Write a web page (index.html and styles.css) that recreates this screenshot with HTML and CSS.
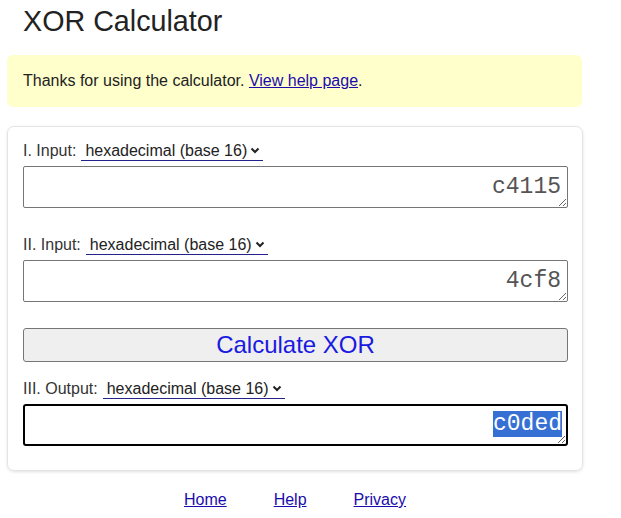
FILE: index.html
```html
<!DOCTYPE html>
<html lang="en">
<head>
<meta charset="utf-8">
<title>XOR Calculator</title>
<link rel="stylesheet" href="styles.css">
</head>
<body>
<div class="page">
  <h1 class="title">XOR Calculator</h1>
  <div class="notice">Thanks for using the calculator. <a href="#" class="link">View help page</a>.</div>
  <form class="card">
    <div class="row">
      <span class="label">I. Input:</span>
      <span class="sel">
        <select class="sel-input"><option>hexadecimal (base 16)</option></select>
        <svg class="chev" width="10" height="7" viewBox="0 0 10 7"><polyline points="1.5,1.5 5,5 8.5,1.5" fill="none" stroke="#222" stroke-width="2"/></svg>
      </span>
    </div>
    <textarea class="field">c4115</textarea>

    <div class="row row-gap">
      <span class="label">II. Input:</span>
      <span class="sel">
        <select class="sel-input"><option>hexadecimal (base 16)</option></select>
        <svg class="chev" width="10" height="7" viewBox="0 0 10 7"><polyline points="1.5,1.5 5,5 8.5,1.5" fill="none" stroke="#222" stroke-width="2"/></svg>
      </span>
    </div>
    <textarea class="field">4cf8</textarea>

    <button type="button" class="calc">Calculate XOR</button>

    <div class="row row-out">
      <span class="label">III. Output:</span>
      <span class="sel">
        <select class="sel-input"><option>hexadecimal (base 16)</option></select>
        <svg class="chev" width="10" height="7" viewBox="0 0 10 7"><polyline points="1.5,1.5 5,5 8.5,1.5" fill="none" stroke="#222" stroke-width="2"/></svg>
      </span>
    </div>
    <div class="field output"><span class="selected">c0ded</span></div>
  </form>
  <nav class="footer">
    <a href="#" class="link">Home</a>
    <a href="#" class="link">Help</a>
    <a href="#" class="link">Privacy</a>
  </nav>
</div>
</body>
</html>
```

FILE: styles.css
```css
html, body {
  margin: 0;
  padding: 0;
  background: #fff;
}
body {
  font-family: "Liberation Sans", Arial, sans-serif;
  color: #222;
}
.page {
  width: 576px;
  margin-left: 7px;
  display: flex;
  flex-direction: column;
}
.title {
  margin: 5px 0 0 16px;
  font-size: 28.7px;
  font-weight: normal;
  line-height: 33px;
  color: #222;
}
.notice {
  margin-top: 17px;
  width: 575px;
  box-sizing: border-box;
  height: 52px;
  padding: 17px 16px;
  font-size: 16px;
  line-height: 18px;
  background: #ffffcc;
  border-radius: 6px;
  color: #222;
}
.link {
  color: #1a0dab;
  text-decoration: underline;
}
.card {
  margin: 19px 0 0 0;
  box-sizing: border-box;
  width: 576px;
  border: 1px solid #e4e4e4;
  border-radius: 7px;
  box-shadow: 0 1px 3px rgba(0, 0, 0, 0.12);
  padding: 14px 15px 24px 15px;
  display: flex;
  flex-direction: column;
}
.row {
  display: flex;
  align-items: center;
  height: 20px;
  margin-bottom: 5px;
  font-size: 16px;
}
.row-gap {
  margin-top: 27px;
}
.row-out {
  margin-top: 17px;
}
.label {
  color: #333;
  margin-right: 5px;
  line-height: 18px;
}
.sel {
  display: inline-flex;
  align-items: center;
  height: 20px;
  box-sizing: border-box;
  border-bottom: 1px solid #23238c;
  padding: 0 3px 0 4px;
}
.sel-input {
  appearance: none;
  -webkit-appearance: none;
  border: none;
  background: transparent;
  padding: 0;
  margin: 0;
  font-family: "Liberation Sans", Arial, sans-serif;
  font-size: 16px;
  line-height: 18px;
  color: #222;
  outline: none;
}
.chev {
  margin-left: 3px;
  display: block;
}
.field {
  display: block;
  width: 545px;
  height: 42px;
  box-sizing: border-box;
  margin: 0;
  border: 1px solid #767676;
  border-radius: 2px;
  padding: 7px 6px 0 4px;
  font-family: "Liberation Mono", "Courier New", monospace;
  font-size: 23px;
  line-height: 26px;
  text-align: right;
  color: #555;
  background: #fff;
  resize: both;
  overflow: hidden;
}
.calc {
  margin-top: 26px;
  width: 545px;
  height: 34px;
  box-sizing: border-box;
  border: 1px solid #767676;
  border-radius: 3px;
  background: #efefef;
  color: #1a1ae0;
  font-family: "Liberation Sans", Arial, sans-serif;
  font-size: 24px;
  line-height: 28px;
  padding: 0;
}
.output {
  border: 2px solid #000;
  border-radius: 3px;
  padding: 5px 4px 0 3px;
}
.selected {
  background: #3670d4;
  color: #fff;
}
.footer {
  display: flex;
  justify-content: center;
  gap: 47px;
  margin-top: 20px;
  font-size: 16px;
  line-height: 18px;
}
```
